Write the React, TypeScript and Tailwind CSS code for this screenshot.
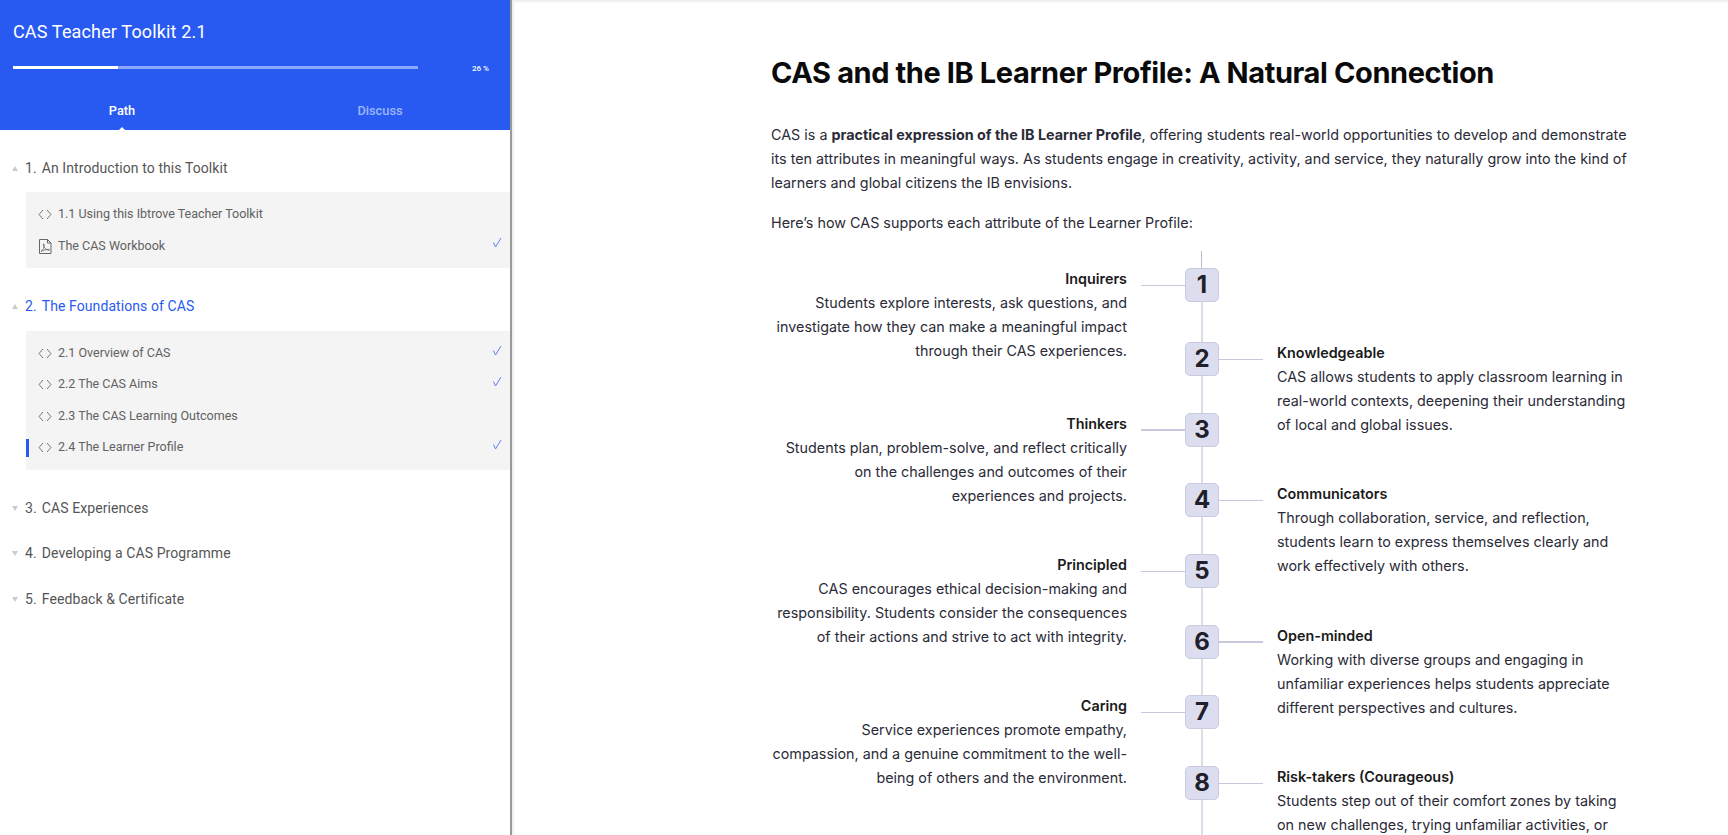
const attributes = [
  {
    n: 1,
    side: "left",
    title: "Inquirers",
    lines: ["Students explore interests, ask questions, and", "investigate how they can make a meaningful impact", "through their CAS experiences."],
  },
  {
    n: 2,
    side: "right",
    title: "Knowledgeable",
    lines: ["CAS allows students to apply classroom learning in", "real-world contexts, deepening their understanding", "of local and global issues."],
  },
  {
    n: 3,
    side: "left",
    title: "Thinkers",
    lines: ["Students plan, problem-solve, and reflect critically", "on the challenges and outcomes of their", "experiences and projects."],
  },
  {
    n: 4,
    side: "right",
    title: "Communicators",
    lines: ["Through collaboration, service, and reflection,", "students learn to express themselves clearly and", "work effectively with others."],
  },
  {
    n: 5,
    side: "left",
    title: "Principled",
    lines: ["CAS encourages ethical decision-making and", "responsibility. Students consider the consequences", "of their actions and strive to act with integrity."],
  },
  {
    n: 6,
    side: "right",
    title: "Open-minded",
    lines: ["Working with diverse groups and engaging in", "unfamiliar experiences helps students appreciate", "different perspectives and cultures."],
  },
  {
    n: 7,
    side: "left",
    title: "Caring",
    lines: ["Service experiences promote empathy,", "compassion, and a genuine commitment to the well-", "being of others and the environment."],
  },
  {
    n: 8,
    side: "right",
    title: "Risk-takers (Courageous)",
    lines: ["Students step out of their comfort zones by taking", "on new challenges, trying unfamiliar activities, or"],
  },
];

function CodeIcon() {
  return (
    <svg width="14" height="11" viewBox="0 0 14 11" fill="none" stroke="#777" strokeWidth="1" className="shrink-0">
      <path d="M5 1 1 5.500 5 10" />
      <path d="M9 1l4 4.500L9 10" />
    </svg>
  );
}

function PdfIcon() {
  return (
    <svg width="14" height="15" viewBox="0 0 14 15" fill="none" stroke="#666" strokeWidth="1" className="shrink-0">
      <path d="M1.500.5h8L13 4v10.500H1.500z" />
      <path d="M9.500.5V4H13" />
      <path d="M3 12.500c2-1 3.500-4.500 3.200-7-.2-1-1-.8-.9.3.2 2.500 3 5.500 5.700 5.500 1 0 .9-1-.2-1-2.500 0-6 1-7.800 2.200z" strokeWidth=".8" />
    </svg>
  );
}

function Tick() {
  return (
    <svg width="9" height="10" viewBox="0 0 9 10" fill="none" stroke="#5a7ff0" strokeWidth="1" className="ml-auto shrink-0 -translate-y-[3.500px]">
      <path d="M.5 5l2 4.500L8 .5" />
    </svg>
  );
}

function Caret({ open }: { open: boolean }) {
  return (
    <span
      className={
        open
          ? "mr-[7px] h-0 w-0 border-x-[3px] border-b-[5px] border-x-transparent border-b-[#ccc]"
          : "mr-[7px] h-0 w-0 border-x-[3px] border-t-[5px] border-x-transparent border-t-[#ccc]"
      }
    />
  );
}

function Lesson({ label, done, active, pdf, className }: { label: string; done?: boolean; active?: boolean; pdf?: boolean; className: string }) {
  return (
    <div className={`relative flex items-center pl-[12px] pr-[8px] ${className}`}>
      {active && <span className="absolute left-0 top-1/2 h-[18px] w-[3px] -translate-y-1/2 bg-[#285af2]" />}
      {pdf ? <PdfIcon /> : <CodeIcon />}
      <span className="ml-[6px] text-[12.500px] text-[#616161]">{label}</span>
      {done && <Tick />}
    </div>
  );
}

function Section({ num, label, open, active, className }: { num: string; label: string; open?: boolean; active?: boolean; className: string }) {
  return (
    <div className={`flex items-center pl-[12px] text-[14px] tracking-[0.08px] ${active ? "text-[#285af2]" : "text-[#555]"} ${className}`}>
      <Caret open={!!open} />
      <span>
        {num} <span className="ml-[1.500px]">{label}</span>
      </span>
    </div>
  );
}

function Row({ item }: { item: (typeof attributes)[number] }) {
  const left = item.side === "left";
  const text = (
    <div className={`h-0 w-[356px] -translate-y-[1.500px] ${left ? "text-right" : ""}`}>
      <div className="whitespace-nowrap font-semibold text-[#1a1a1a]">{item.title}</div>
      {item.lines.map((l) => (
        <div key={l} className="whitespace-nowrap">
          {l}
        </div>
      ))}
    </div>
  );

  return (
    <div className={item.n === 1 ? "flex h-[74px]" : "flex h-[70.700px]"}>
      <div className="w-[356px]">{left && text}</div>
      <div className="flex w-[58px] pl-[14px] pt-[16.500px]">
        {left && <div className="h-[1.500px] w-[44px] bg-[#c8c8dc]" />}
      </div>
      <div className="flex w-[34px] flex-col items-center">
        <div className="flex h-[34px] w-[34px] shrink-0 items-center justify-center rounded-[5px] border border-[#c9cbe3] bg-[#dcdef0] text-[24px] font-bold text-[#20202a]">
          {item.n}
        </div>
        <div className="w-px flex-1 -translate-x-[0.5px] bg-[#bdbdd2]" />
      </div>
      <div className="flex w-[58px] pt-[16.500px]">
        {!left && <div className="h-[1.500px] w-[44px] bg-[#c8c8dc]" />}
      </div>
      <div className="w-[356px]">{!left && text}</div>
    </div>
  );
}

export default function App() {
  return (
    <div className="flex h-[835px] w-full overflow-hidden bg-white font-['Inter',sans-serif]">
      {/* Sidebar */}
      <aside className="flex h-full w-[512px] shrink-0 flex-col border-r-2 border-[#999] font-['Roboto',sans-serif]">
        <header className="h-[130px] shrink-0 bg-[#285af2] text-white">
          <div className="px-[13px] pt-[21px] text-[18px] leading-[22px] tracking-[0.15px]">CAS Teacher Toolkit 2.1</div>
          <div className="mt-[18px] flex items-center px-[13px]">
            <div className="h-[3px] w-[405px] bg-[#8ba7f9]">
              <div className="h-full w-[105px] bg-white" />
            </div>
            <span className="ml-[54px] mt-[3px] text-[8px] font-medium leading-[10px]">26 %</span>
          </div>
          <div className="mt-[19px] flex">
            <div className="relative flex h-[39px] w-[244px] shrink-0 justify-center text-[12.800px] font-medium leading-[36px]">
              Path
              <span className="absolute bottom-0 left-[117px] h-0 w-0 border-x-[5px] border-b-[5px] border-x-transparent border-b-white" />
            </div>
            <div className="flex h-[39px] flex-1 justify-center pl-[6px] text-[12.800px] font-medium leading-[36px] text-[#9db6fb]">Discuss</div>
          </div>
        </header>

        <Section num="1." label="An Introduction to this Toolkit" open className="mt-[24px] h-[28px]" />
        <div className="ml-[26px] mt-[10px] h-[76px] bg-[#f4f4f4] pt-[6px]">
          <Lesson label="1.1 Using this Ibtrove Teacher Toolkit" className="h-[32px]" />
          <Lesson label="The CAS Workbook" pdf done className="h-[32px]" />
        </div>

        <Section num="2." label="The Foundations of CAS" open active className="mt-[24px] h-[28px]" />
        <div className="ml-[26px] mt-[11px] h-[139px] bg-[#f4f4f4] pt-[7px]">
          <Lesson label="2.1 Overview of CAS" done className="h-[31px]" />
          <Lesson label="2.2 The CAS Aims" done className="h-[31px]" />
          <Lesson label="2.3 The CAS Learning Outcomes" className="h-[32px]" />
          <Lesson label="2.4 The Learner Profile" done active className="h-[31px]" />
        </div>

        <Section num="3." label="CAS Experiences" className="mt-[24px] h-[28px]" />
        <Section num="4." label="Developing a CAS Programme" className="mt-[17px] h-[28px]" />
        <Section num="5." label="Feedback & Certificate" className="mt-[18px] h-[28px]" />
      </aside>

      {/* Lesson content */}
      <main className="min-w-0 flex-1 pl-[259px] pt-[50px] text-[14.350px] leading-[24px] text-[#2b2b38] shadow-[inset_2px_2px_2px_#eeeeee]">
        <h1 className="text-[29px] font-bold leading-[46px] tracking-[-0.4px] text-[#0a0a0a]">CAS and the IB Learner Profile: A Natural Connection</h1>
        <p className="mt-[27px] w-[860px]">
          CAS is a <strong className="font-bold">practical expression of the IB Learner Profile</strong>, offering students real-world opportunities to develop and demonstrate its ten attributes in meaningful ways. As students engage in creativity, activity, and service, they naturally grow into the kind of learners and global citizens the IB envisions.
        </p>
        <p className="mt-[16px]">Here’s how CAS supports each attribute of the Learner Profile:</p>

        <div className="mt-[16px]">
          <div className="ml-[430px] h-[17px] w-px bg-[#bdbdd2]" />
          {attributes.map((item) => (
            <Row key={item.n} item={item} />
          ))}
        </div>
      </main>
    </div>
  );
}
